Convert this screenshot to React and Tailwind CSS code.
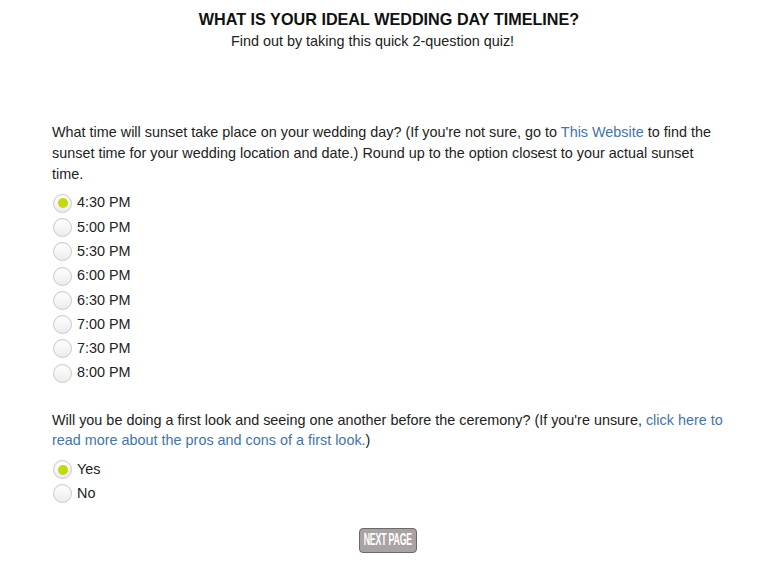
import { useState } from 'react';

const sunsetTimes = ['4:30 PM', '5:00 PM', '5:30 PM', '6:00 PM', '6:30 PM', '7:00 PM', '7:30 PM', '8:00 PM'];

const Radio = ({ checked, label, onClick }) => (
  <label onClick={onClick} className="flex items-center h-[24.3px] cursor-pointer">
    <span className="ml-[1px] w-[19px] h-[19px] rounded-full border border-[#c9c9c9] bg-gradient-to-b from-[#ffffff] to-[#ececec] flex items-center justify-center shadow-[inset_0_1px_1px_rgba(0,0,0,0.04)]">
      {checked && <span className="w-[10px] h-[10px] rounded-full bg-[#c3d80d]" />}
    </span>
    <span className="ml-[5px] text-[14.4px] text-[#222]">{label}</span>
  </label>
);

const App = () => {
  const [sunset, setSunset] = useState('4:30 PM');
  const [firstLook, setFirstLook] = useState('Yes');

  return (
    <div className="w-[781px] h-[576px] bg-white font-['Liberation_Sans',Arial,sans-serif] text-[#222]">
      <div className="pt-[9px] text-center">
        <h1 className="text-[16.2px] leading-[20px] font-bold text-[#111] pr-[3px]">
          WHAT IS YOUR IDEAL WEDDING DAY TIMELINE?
        </h1>
        <p className="text-[14.4px] leading-[18px] pr-[36px] mt-[3px]">
          Find out by taking this quick 2-question quiz!
        </p>
      </div>

      <div className="pl-[52px] w-[728px] mt-[72px]">
        <p className="text-[14.4px] leading-[21px]">
          What time will sunset take place on your wedding day? (If you're not sure, go to{' '}
          <a className="text-[#4574a8]">This Website</a> to find the sunset time for your wedding location and date.) Round up to the option closest to your actual sunset time.
        </p>
        <div className="mt-[6px] flex flex-col">
          {sunsetTimes.map((t) => (
            <Radio key={t} label={t} checked={sunset === t} onClick={() => setSunset(t)} />
          ))}
        </div>

        <p className="text-[14.4px] leading-[20px] mt-[25px]">
          Will you be doing a first look and seeing one another before the ceremony? (If you're unsure,{' '}
          <a className="text-[#4574a8]">click here to read more about the pros and cons of a first look.</a>)
        </p>
        <div className="mt-[7px] flex flex-col">
          {['Yes', 'No'].map((o) => (
            <Radio key={o} label={o} checked={firstLook === o} onClick={() => setFirstLook(o)} />
          ))}
        </div>
      </div>

      <div className="flex justify-center mt-[22px] pr-[6px]">
        <button className="w-[58px] h-[25px] rounded-[4px] border border-[#6f6869] bg-[#aaa3a4] text-white flex items-center justify-center overflow-hidden">
          <span className="inline-block whitespace-nowrap text-[16px] leading-[16px] font-bold scale-x-[0.55] tracking-[-0.4px]">
            NEXT PAGE
          </span>
        </button>
      </div>
    </div>
  );
};

export default App;
